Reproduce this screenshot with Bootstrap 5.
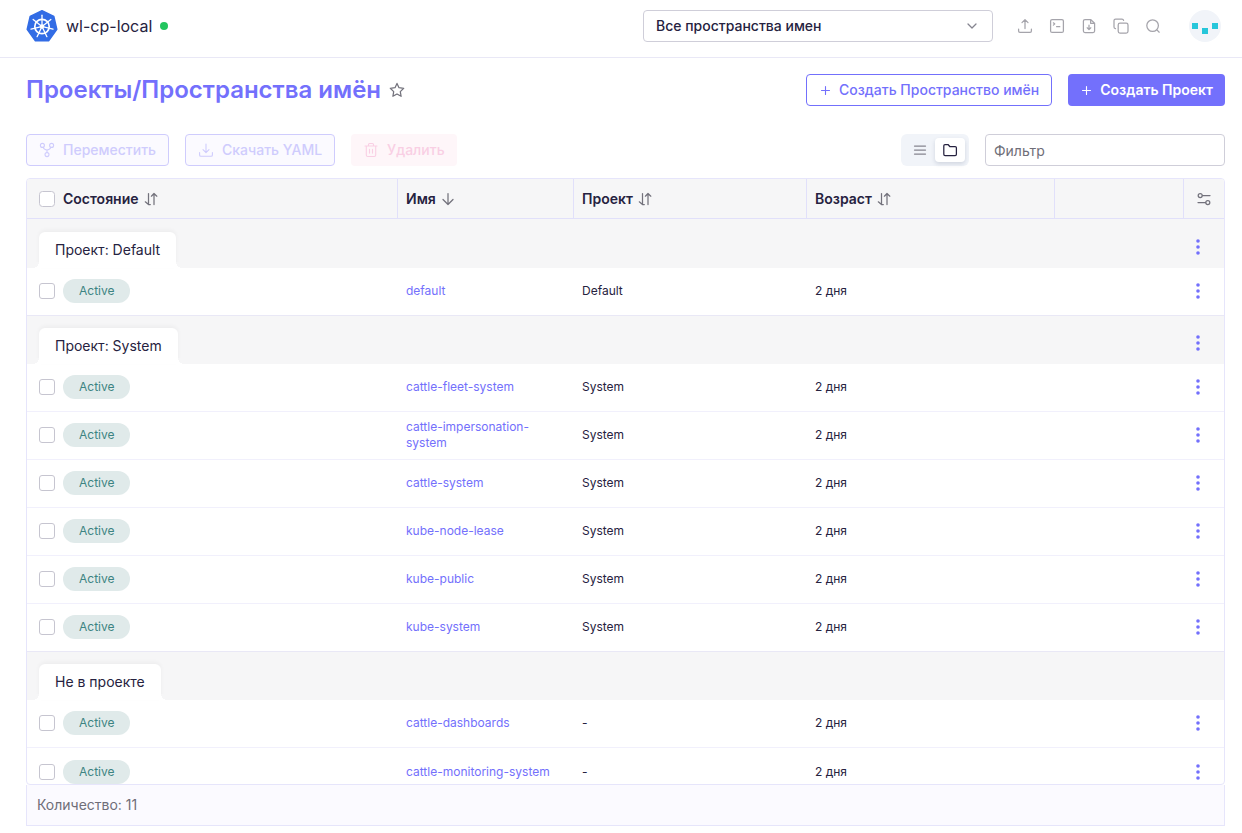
<!DOCTYPE html>
<html lang="ru">
<head>
<meta charset="utf-8">
<meta name="viewport" content="width=device-width, initial-scale=1">
<title>Проекты/Пространства имён</title>
<link rel="stylesheet" href="https://cdn.jsdelivr.net/npm/bootstrap@5.3.0/dist/css/bootstrap.min.css">
<style>
  :root { --accent: #7370fc; --line: #e6e5fb; --ink: #262240; --muted: #6f6e78; }
  body { font-family: Inter, "Liberation Sans", sans-serif; font-size: 14px; line-height: 20px; color: var(--ink); background: #fff; }
  svg { display: block; flex: none; fill: none; stroke: currentColor; stroke-width: 1.25; stroke-linecap: round; stroke-linejoin: round; }
  .topbar { height: 58px; padding: 0 21px 5px 26px; border-bottom: 1px solid #e9e8f6; }
  .cluster { font-size: 16px; color: var(--ink); }
  .online { width: 8px; height: 8px; background: #22c55e; }
  .ns-select { width: 350px; height: 32px; padding: 0 32px 0 12px; font-size: 14px; line-height: 20px; font-weight: 500; color: var(--ink); border-color: #cfced9; border-radius: 4px;
    background-image: url("data:image/svg+xml,%3Csvg xmlns='http://www.w3.org/2000/svg' viewBox='0 0 16 16' fill='none' stroke='%2385848f' stroke-width='1.25' stroke-linecap='round' stroke-linejoin='round'%3E%3Cpath d='M4 6l4 4 4-4'/%3E%3C/svg%3E"); background-size: 16px; background-position: right 12px center; }
  .tool { width: 32px; height: 32px; color: #a5a4ab; }
  .profile { margin-left: 20px; }
  .content { padding: 16px 17px 7px 26px; min-height: 0; }
  .page-title { font-size: 24px; line-height: 32px; font-weight: 600; color: var(--accent); }
  .act { height: 32px; padding: 0 12px; font-size: 14px; line-height: 20px; font-weight: 500; border-radius: 4px; gap: 8px; display: inline-flex; align-items: center; white-space: nowrap; }
  .act svg { stroke-width: 1.1; }
  .act-outline { color: var(--accent); border-color: var(--accent); background: #fff; }
  .act-fill { color: #fff; background: var(--accent); border: 0; font-weight: 600; }
  .act-soft:disabled { color: #cfccfd; border-color: #cfccfd; background: #fbfaff; opacity: 1; }
  .act-danger:disabled { color: #f9cfe4; border: 0; background: #fef6f9; opacity: 1; }
  .toolbar { margin: 28px 0 12px; }
  .switcher { padding: 4px; background: #f1f4f9; border-radius: 6px; }
  .switcher label { width: 30px; height: 24px; border-radius: 4px; color: #85848f; cursor: pointer; }
  .switcher input:checked + label { background: #fff; color: var(--ink); box-shadow: 0 2px 4px rgba(30, 41, 80, .15); }
  .filter { width: 240px; height: 32px; padding: 0 8px; font-size: 14px; line-height: 20px; border-color: #cfced9; border-radius: 4px; }
  .filter::placeholder { color: #6f6e78; }
  .grid-wrap { min-height: 0; overflow: auto; scrollbar-width: none; border: 1px solid var(--line); border-radius: 4px; }
  .grid-wrap::-webkit-scrollbar { display: none; }
  .ns-grid { width: 100%; min-width: 1000px; table-layout: fixed; border-collapse: separate; border-spacing: 0; font-size: 12px; line-height: 16px; }
  .ns-grid th, .ns-grid td { padding: 0 8px; }
  .ns-grid thead th { height: 40px; background: #f6f6f7; border-bottom: 1px solid #e1e0fa; font-size: 14px; line-height: 20px; font-weight: 600; }
  .ns-grid .rule { border-left: 1px solid #e1e0fa; }
  .ns-grid .flush { padding-left: 0; }
  .ns-grid .pick { padding: 0 0 0 12px; }
  .ns-grid .menu-cell { padding: 0 14px 0 0; }
  .ns-grid thead .menu-cell { padding: 0; }
  .ns-grid tbody td { height: 48px; border-bottom: 1px solid #f1f0fc; }
  .ns-grid tbody .item-row td { padding-bottom: 1px; }
  .ns-grid .name, .ns-grid .txt { padding-left: 9px; }
  .ns-grid tbody tr:last-child td, .ns-grid .group-row td, .ns-grid .group-row th { border-bottom: 0; }
  .ns-grid .last-in-group td { border-bottom-color: #e9e8f6; }
  .group-row th, .group-row td { height: 48px; background: #f6f6f7; font-weight: 400; }
  .group-row:first-child th, .group-row:first-child td { height: 49px; }
  .ns-grid .group-row .menu-cell { padding: 0 14px 9px 0; vertical-align: bottom; }
  .ns-grid .group-row .tab-cell { padding: 0 0 0 12px; vertical-align: bottom; }
  .group-tab { position: relative; display: inline-block; height: 36px; padding: 8px 16px; font-size: 14px; line-height: 20px; background: #fff; border-radius: 6px 6px 0 0; box-shadow: 0 -2px 4px rgba(0, 0, 0, .04); vertical-align: bottom; }
  .group-tab::before, .group-tab::after { content: ""; position: absolute; bottom: 0; width: 6px; height: 6px; }
  .group-tab::before { right: 100%; background: radial-gradient(circle at 0 0, #f6f6f7 6px, #fff 6px); }
  .group-tab::after { left: 100%; background: radial-gradient(circle at 100% 0, #f6f6f7 6px, #fff 6px); }
  .tick { display: block; width: 16px; height: 16px; margin: 0; border: 1px solid #c6c5d0; border-radius: 4px; }
  .state { display: inline-block; padding: 4px 16px; background: #e0eaea; color: #3d8482; border-radius: 12px; font-size: 12px; line-height: 16px; }
  .ns-grid a { color: var(--accent); text-decoration: none; }
  .menu { width: 24px; height: 24px; color: var(--accent); margin-left: auto; }
  .menu svg { fill: currentColor; stroke: none; }
  .sorter { color: #73727c; }
  .summary { height: 41px; padding: 0 10px; background: #fbfaff; border: 1px solid var(--line); border-top: 0; color: var(--muted); }
</style>
</head>
<body class="vh-100 d-flex flex-column">

<header class="topbar d-flex align-items-center flex-shrink-0">
  <a class="cluster d-flex align-items-center gap-2 text-decoration-none" href="#">
    <svg width="32" height="32" viewBox="0 0 32 32" aria-hidden="true">
      <path d="M16 .8 27.8 6.5 30.8 19.3 22.6 30.8H9.4L1.2 19.3 4.2 6.5Z" fill="#326ce5" stroke="#326ce5" stroke-width="1.5"/>
      <g stroke="#fff">
        <circle cx="16" cy="16.5" r="7.2" stroke-width="1.7"/>
        <g stroke-width="1.3">
          <path id="spoke" d="M16 14.8V5.2"/>
          <use href="#spoke" transform="rotate(51.43 16 16.5)"/><use href="#spoke" transform="rotate(102.86 16 16.5)"/>
          <use href="#spoke" transform="rotate(154.29 16 16.5)"/><use href="#spoke" transform="rotate(205.71 16 16.5)"/>
          <use href="#spoke" transform="rotate(257.14 16 16.5)"/><use href="#spoke" transform="rotate(308.57 16 16.5)"/>
        </g>
        <circle cx="16" cy="16.5" r="2.2" fill="#fff" stroke="none"/>
      </g>
    </svg>
    <span>wl-cp-local</span><span class="online rounded-circle"></span>
  </a>
  <select class="form-select ns-select ms-auto" aria-label="Пространства имен"><option>Все пространства имен</option></select>
  <div class="d-flex ms-3">
    <button class="btn tool p-0 border-0 d-flex align-items-center justify-content-center" aria-label="Импорт"><svg width="16" height="16" viewBox="0 0 16 16"><path d="M8 10.5V1.8M5 4.6l3-3 3 3M1.6 11v2q0 1.3 1.3 1.3h10.2q1.3 0 1.3-1.3v-2"/></svg></button>
    <button class="btn tool p-0 border-0 d-flex align-items-center justify-content-center" aria-label="Консоль"><svg width="16" height="16" viewBox="0 0 16 16"><rect x="1.6" y="1.6" width="12.8" height="12.8" rx="1.5"/><path d="M4.4 4.8l1.4 1.1-1.4 1.2M7.6 8.7h3.2"/></svg></button>
    <button class="btn tool p-0 border-0 d-flex align-items-center justify-content-center" aria-label="Скачать файл"><svg width="16" height="16" viewBox="0 0 16 16"><path d="M9.6 1.5H4Q2.4 1.5 2.4 3v10q0 1.5 1.6 1.5h8q1.6 0 1.6-1.5V5.3zM9.6 1.5v3.8h4M8 7.2v4.2M6.2 9.8 8 11.6l1.8-1.8"/></svg></button>
    <button class="btn tool p-0 border-0 d-flex align-items-center justify-content-center" aria-label="Копировать"><svg width="16" height="16" viewBox="0 0 16 16"><rect x="5.2" y="5.2" width="9.8" height="9.8" rx="1.8"/><path d="M2.5 10.6Q1 10.3 1 9V2.6Q1 1 2.6 1H9q1.3 0 1.6 1.4"/></svg></button>
    <button class="btn tool p-0 border-0 d-flex align-items-center justify-content-center" aria-label="Поиск"><svg width="16" height="16" viewBox="0 0 16 16"><circle cx="7.6" cy="7.6" r="5.8"/><path d="M11.9 11.9l2.3 2.3"/></svg></button>
  </div>
  <button class="btn profile p-0 border-0 rounded-circle flex-shrink-0" aria-label="Профиль"><svg width="32" height="32" viewBox="0 0 32 32"><circle cx="16" cy="16" r="16" fill="#f1f4f9" stroke="none"/><g fill="#26c6da" stroke="none"><path d="M3 13h6v6H3zM13 18h6v6h-6zM23 13h6v6h-6z"/></g></svg></button>
</header>

<main class="content d-flex flex-column flex-grow-1">
  <div class="d-flex align-items-center flex-shrink-0">
    <h1 class="page-title mb-0">Проекты/Пространства имён</h1>
    <button class="btn p-0 border-0 ms-2 sorter" aria-label="В избранное"><svg width="16" height="16" viewBox="0 0 16 16"><path d="M8 1.4l2 4.3 4.7.6-3.4 3.3.8 4.7L8 12l-4.1 2.3.8-4.7L1.3 6.3 6 5.7z"/></svg></button>
    <div class="d-flex gap-3 ms-auto">
      <button class="btn act act-outline"><svg width="12" height="12" viewBox="0 0 12 12"><path d="M6.5 2.5v8M2.500 6.5h8"/></svg>Создать Пространство имён</button>
      <button class="btn act act-fill"><svg width="12" height="12" viewBox="0 0 12 12"><path d="M6.5 2.5v8M2.500 6.5h8"/></svg>Создать Проект</button>
    </div>
  </div>

  <div class="toolbar d-flex align-items-center gap-3 flex-shrink-0">
    <button class="btn act act-soft" disabled><svg width="16" height="16" viewBox="0 0 16 16"><circle cx="3.4" cy="3.4" r="2"/><circle cx="12.6" cy="3.4" r="2"/><circle cx="8" cy="12.6" r="2"/><path d="M4.2 5.4Q5 7.800 8 8q3-.2 3.8-2.6M8 8v2.4"/></svg>Переместить</button>
    <button class="btn act act-soft" disabled><svg width="16" height="16" viewBox="0 0 16 16"><path d="M8 2v8.5M5 7.6l3 3 3-3M1.6 10.5V13q0 1.3 1.3 1.3h10.2q1.3 0 1.3-1.3v-2.5"/></svg>Скачать YAML</button>
    <button class="btn act act-danger" disabled><svg width="16" height="16" viewBox="0 0 16 16"><path d="M2 4h12M5.5 4V2.5q0-1 1-1h3q1 0 1 1V4M3.3 4v9q0 1.5 1.5 1.5h6.4q1.5 0 1.5-1.5V4M6.5 7.3v3.8M9.5 7.3v3.8"/></svg>Удалить</button>
    <div class="switcher d-flex ms-auto">
      <input class="btn-check" type="radio" name="view" id="viewList"><label for="viewList" class="d-flex align-items-center justify-content-center" aria-label="Список"><svg width="16" height="16" viewBox="0 0 16 16"><path d="M2.5 4h11M2.5 8h11M2.5 12h11"/></svg></label>
      <input class="btn-check" type="radio" name="view" id="viewGroup" checked><label for="viewGroup" class="d-flex align-items-center justify-content-center" aria-label="Группы"><svg width="16" height="16" viewBox="0 0 16 16"><path d="M1.8 3.8Q1.8 2.5 3 2.5h3l1.8 2h5.4q1.2 0 1.2 1.2v6.5q0 1.3-1.3 1.3H3.1q-1.3 0-1.3-1.3z"/></svg></label>
    </div>
    <input class="form-control filter" type="search" placeholder="Фильтр" aria-label="Фильтр">
  </div>

  <div class="grid-wrap">
    <table class="ns-grid">
      <colgroup><col style="width:36px"><col><col style="width:176px"><col style="width:233px"><col style="width:248px"><col style="width:129px"><col style="width:41px"></colgroup>
      <thead>
        <tr>
          <th class="pick"><input type="checkbox" class="form-check-input tick" aria-label="Выбрать все"></th>
          <th class="flush"><div class="d-flex align-items-center gap-1">Состояние <svg class="sorter" width="16" height="16" viewBox="0 0 16 16"><path d="M5.5 2.5v11M2.3 10.8 5.5 13.5H7.3M11 13.5v-11M8.4 5.2 11 2.5l2.8 2.7"/></svg></div></th>
          <th class="rule"><div class="d-flex align-items-center gap-1">Имя <svg class="sorter" width="16" height="16" viewBox="0 0 16 16"><path d="M8 2.5v11M3 8.5l5 5 5-5"/></svg></div></th>
          <th class="rule"><div class="d-flex align-items-center gap-1">Проект <svg class="sorter" width="16" height="16" viewBox="0 0 16 16"><path d="M5.5 2.5v11M2.3 10.8 5.5 13.5H7.3M11 13.5v-11M8.4 5.2 11 2.5l2.8 2.7"/></svg></div></th>
          <th class="rule"><div class="d-flex align-items-center gap-1">Возраст <svg class="sorter" width="16" height="16" viewBox="0 0 16 16"><path d="M5.5 2.5v11M2.3 10.8 5.5 13.5H7.3M11 13.5v-11M8.4 5.2 11 2.5l2.8 2.7"/></svg></div></th>
          <th class="rule"></th>
          <th class="rule menu-cell"><button class="btn p-0 border-0 d-block mx-auto sorter" aria-label="Настроить столбцы"><svg width="16" height="16" viewBox="0 0 16 16"><circle cx="4.2" cy="4.5" r="2"/><path d="M6.5 4.5H14M2 11.5h7.5"/><circle cx="11.8" cy="11.5" r="2"/></svg></button></th>
        </tr>
      </thead>
      <tbody id="rows"></tbody>
    </table>
  </div>
  <div class="summary d-flex align-items-center flex-shrink-0">Количество: 11</div>
</main>

<script src="https://cdn.jsdelivr.net/npm/bootstrap@5.3.0/dist/js/bootstrap.bundle.min.js"></script>
<script>
  const groups = [
    { title: 'Проект: Default', project: 'Default', menu: true, names: ['default'] },
    { title: 'Проект: System', project: 'System', menu: true, names: ['cattle-fleet-system', 'cattle-impersonation-system', 'cattle-system', 'kube-node-lease', 'kube-public', 'kube-system'] },
    { title: 'Не в проекте', project: '-', menu: false, names: ['cattle-dashboards', 'cattle-monitoring-system'] }
  ];
  const menu = '<button class="btn menu p-0 border-0 d-flex align-items-center justify-content-center" aria-label="Действия"><svg width="16" height="16" viewBox="0 0 16 16"><circle cx="8" cy="2" r="1.8"/><circle cx="8" cy="8" r="1.8"/><circle cx="8" cy="14" r="1.8"/></svg></button>';
  document.getElementById('rows').innerHTML = groups.map(g =>
    `<tr class="group-row"><th class="tab-cell" colspan="6" scope="rowgroup"><span class="group-tab">${g.title}</span></th><td class="menu-cell">${g.menu ? menu : ''}</td></tr>` +
    g.names.map((n, i) => `<tr class="item-row ${i === g.names.length - 1 ? 'last-in-group' : ''}">
      <td class="pick"><input type="checkbox" class="form-check-input tick" aria-label="${n}"></td>
      <td class="flush"><span class="state">Active</span></td>
      <td class="name"><a href="#">${n}</a></td>
      <td class="txt">${g.project}</td><td class="txt">2 дня</td><td></td>
      <td class="menu-cell">${menu}</td></tr>`).join('')).join('');
</script>
</body>
</html>
